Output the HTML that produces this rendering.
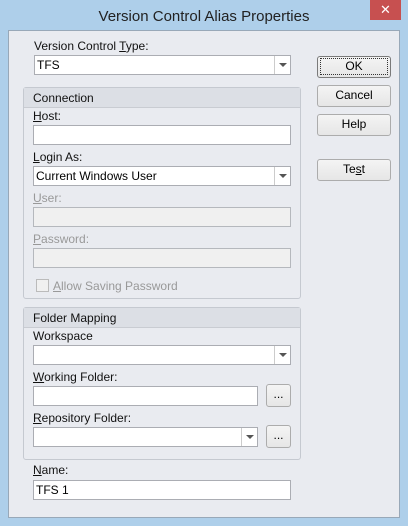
<!DOCTYPE html>
<html><head><style>
*{box-sizing:border-box;margin:0;padding:0}
body{width:408px;height:526px;background:#aecfea;font-family:"Liberation Sans",sans-serif;font-size:12px;color:#000;position:relative;overflow:hidden}
.a{position:absolute}
.title{left:0;width:408px;top:8px;text-align:center;font-size:15px;color:#222}
.close{left:370px;top:0;width:31px;height:20px;background:#c75050;color:#fff;text-align:center;font-size:13px;line-height:20px}
.client{left:8px;top:30px;width:392px;height:488px;background:#e9ebf0;border:1px solid #98a8b8}
.lbl{font-size:12px;color:#111}
.dis{color:#999}
.inp{background:#fff;border:1px solid #abadb3;height:20px;padding-left:2px;line-height:18px}
.inp.d{background:#f0f0f0;border-color:#b5b8bd}
.arr{position:absolute;right:0;top:0;width:16px;height:18px;border-left:1px solid #ccc}
.arr:after{content:"";position:absolute;left:4px;top:7px;border-left:4px solid transparent;border-right:4px solid transparent;border-top:4px solid #555}
.grp{border:1px solid #c5c9d0;border-radius:3px}
.gh{position:absolute;left:0;top:0;right:0;height:20px;background:#dcdfe5;border-bottom:1px solid #c9ccd2;padding:3px 0 0 9px;color:#111}
.btn{background:linear-gradient(#f4f4f4,#e6e6e6);border:1px solid #acacac;border-radius:3px;text-align:center;line-height:19px}
</style></head><body>
<div class="a title">Version Control Alias Properties</div>
<div class="a close">✕</div>
<div class="a client"></div>

<div class="a lbl" style="left:34px;top:39px">Version Control <u>T</u>ype:</div>
<div class="a inp" style="left:34px;top:55px;width:257px">TFS<div class="arr"></div></div>

<div class="a grp" style="left:23px;top:87px;width:278px;height:212px"><div class="gh">Connection</div></div>
<div class="a lbl" style="left:33px;top:109px"><u>H</u>ost:</div>
<div class="a inp" style="left:33px;top:125px;width:258px"></div>
<div class="a lbl" style="left:33px;top:150px"><u>L</u>ogin As:</div>
<div class="a inp" style="left:33px;top:166px;width:258px">Current Windows User<div class="arr"></div></div>
<div class="a lbl dis" style="left:33px;top:191px"><u>U</u>ser:</div>
<div class="a inp d" style="left:33px;top:207px;width:258px"></div>
<div class="a lbl dis" style="left:33px;top:232px"><u>P</u>assword:</div>
<div class="a inp d" style="left:33px;top:248px;width:258px"></div>
<div class="a" style="left:36px;top:279px;width:13px;height:13px;border:1px solid #bbb;background:#f0f0f0"></div>
<div class="a lbl dis" style="left:53px;top:279px"><u>A</u>llow Saving Password</div>

<div class="a grp" style="left:23px;top:307px;width:278px;height:153px"><div class="gh">Folder Mapping</div></div>
<div class="a lbl" style="left:33px;top:329px">Workspace</div>
<div class="a inp" style="left:33px;top:345px;width:258px"><div class="arr"></div></div>
<div class="a lbl" style="left:33px;top:370px"><u>W</u>orking Folder:</div>
<div class="a inp" style="left:33px;top:386px;width:225px"></div>
<div class="a btn" style="left:266px;top:384px;width:25px;height:23px">...</div>
<div class="a lbl" style="left:33px;top:411px"><u>R</u>epository Folder:</div>
<div class="a inp" style="left:33px;top:427px;width:225px"><div class="arr"></div></div>
<div class="a btn" style="left:266px;top:425px;width:25px;height:23px">...</div>

<div class="a lbl" style="left:33px;top:463px"><u>N</u>ame:</div>
<div class="a inp" style="left:33px;top:480px;width:258px">TFS 1</div>

<div class="a btn" style="left:317px;top:56px;width:74px;height:22px;border-color:#7a7a7a"><span style="outline:1px dotted #333;outline-offset:0;display:inline-block;width:66px;line-height:15px;margin-top:2px">OK</span></div>
<div class="a btn" style="left:317px;top:85px;width:74px;height:22px">Cancel</div>
<div class="a btn" style="left:317px;top:114px;width:74px;height:22px">Help</div>
<div class="a btn" style="left:317px;top:159px;width:74px;height:22px">Te<u>s</u>t</div>
</body></html>
